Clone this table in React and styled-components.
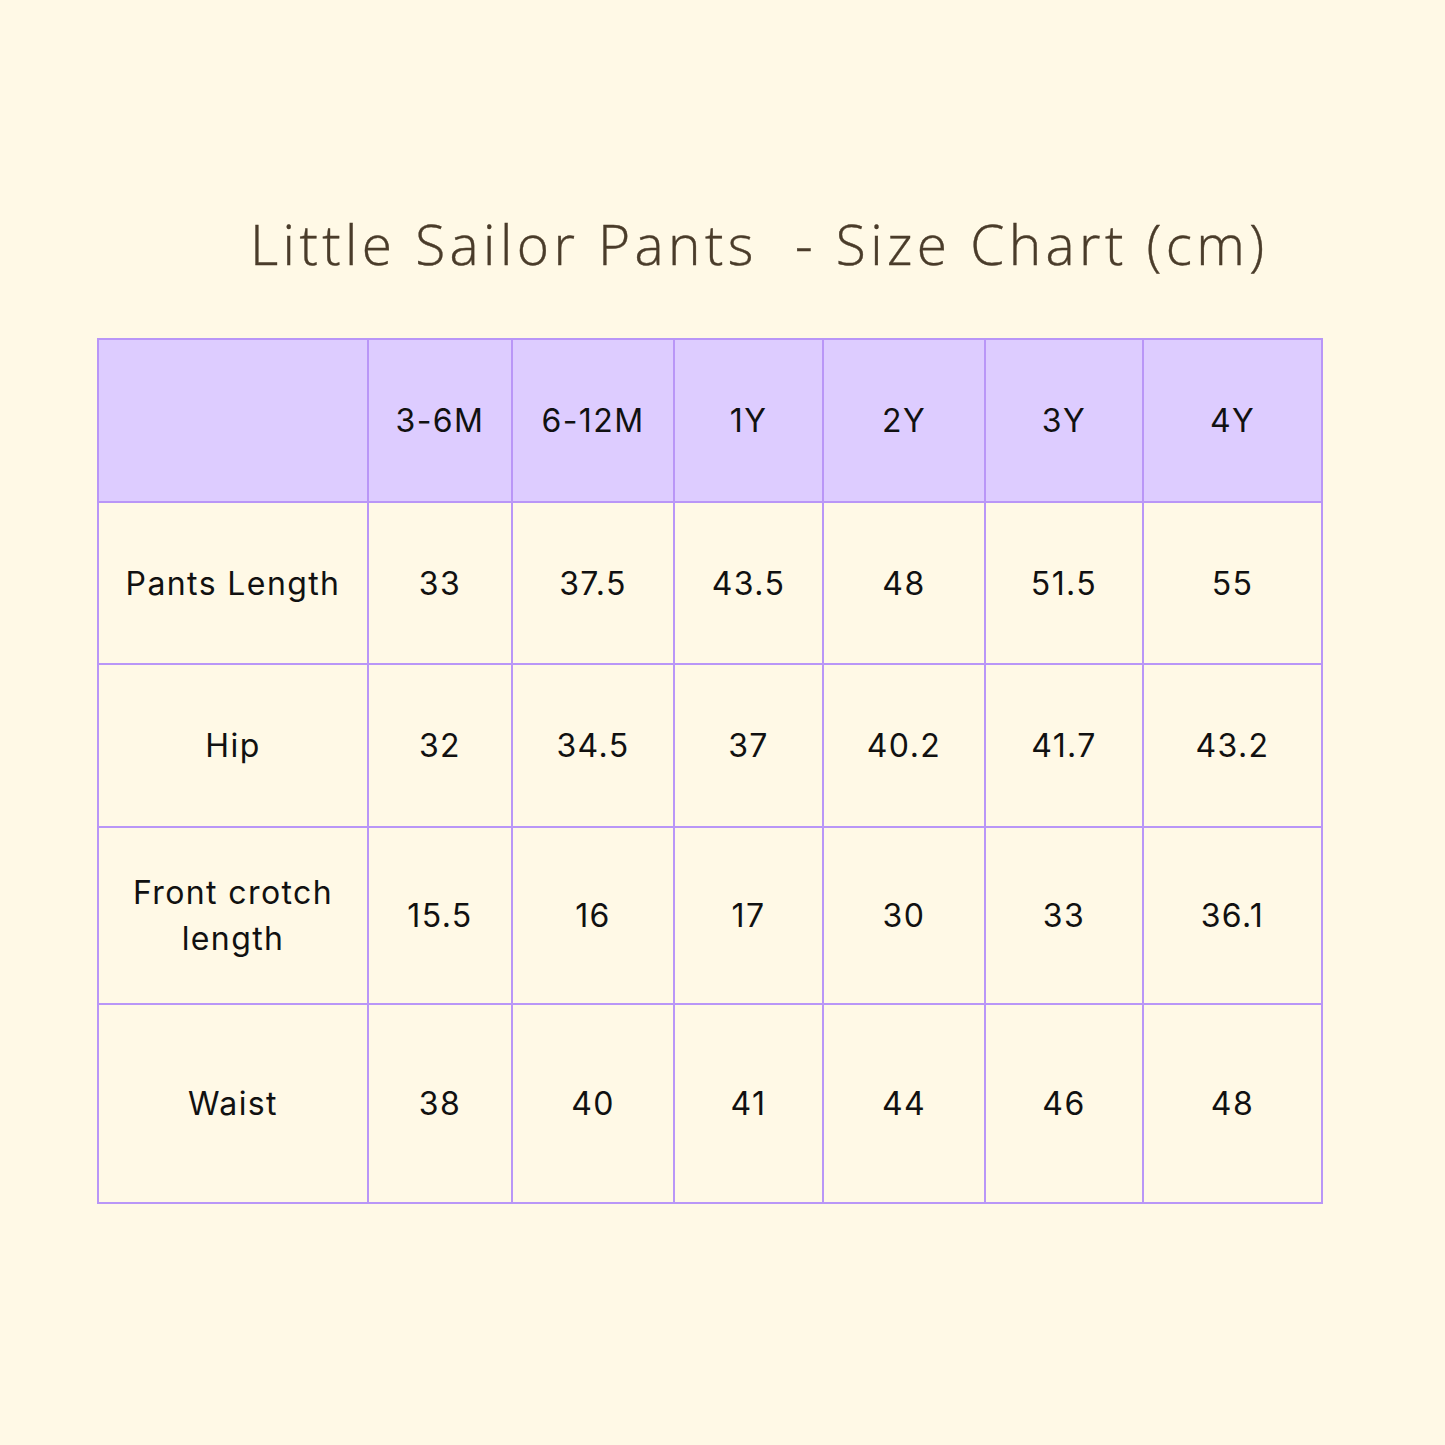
import React from 'react';
import styled, { createGlobalStyle } from 'styled-components';

const GlobalStyle = createGlobalStyle`
  html, body {
    margin: 0;
    padding: 0;
    background: #fff9e6;
  }
`;

const sizes = ['3-6M', '6-12M', '1Y', '2Y', '3Y', '4Y'];

const rows = [
  { label: 'Pants Length', values: ['33', '37.5', '43.5', '48', '51.5', '55'], height: 162 },
  { label: 'Hip', values: ['32', '34.5', '37', '40.2', '41.7', '43.2'], height: 163 },
  { label: ['Front crotch', 'length'], values: ['15.5', '16', '17', '30', '33', '36.1'], height: 177 },
  { label: 'Waist', values: ['38', '40', '41', '44', '46', '48'], height: 199 },
];

const colWidths = [270, 144, 162, 149, 162, 158, 179];

function App() {
  return (
    <Page>
      <GlobalStyle />
      <Title>Little Sailor Pants&nbsp; - Size Chart (cm)</Title>
      <Table>
        <colgroup>
          {colWidths.map((w, i) => (
            <col key={i} style={{ width: w }} />
          ))}
        </colgroup>
        <thead>
          <Row $height={163}>
            <HeadCell />
            {sizes.map((s) => (
              <HeadCell key={s}>{s}</HeadCell>
            ))}
          </Row>
        </thead>
        <tbody>
          {rows.map((r, i) => (
            <Row key={i} $height={r.height}>
              <Cell>
                {Array.isArray(r.label)
                  ? r.label.map((l, j) => <LabelLine key={j}>{l}</LabelLine>)
                  : r.label}
              </Cell>
              {r.values.map((v, j) => (
                <Cell key={j}>{v}</Cell>
              ))}
            </Row>
          ))}
        </tbody>
      </Table>
    </Page>
  );
}

const Page = styled.div`
  width: 1445px;
  height: 1445px;
  box-sizing: border-box;
  padding: 210px 0 0 97px;
  display: flex;
  flex-direction: column;
  align-items: flex-start;
`;

const Title = styled.h1`
  margin: 0 0 60px 153px;
  font-family: "Open Sans", sans-serif;
  font-weight: 300;
  font-size: 55px;
  line-height: 68px;
  letter-spacing: 4.4px;
  color: #4a3c2a;
  -webkit-text-stroke: 0.4px #4a3c2a;
  white-space: pre;
`;

const Table = styled.table`
  border-collapse: collapse;
  table-layout: fixed;
  width: 1224px;
  font-family: Inter, "Open Sans", sans-serif;
  font-size: 32px;
  letter-spacing: 1.4px;
  color: #111111;
`;

const Row = styled.tr`
  height: ${(p) => p.$height}px;
`;

const HeadCell = styled.th`
  background: #ddccff;
  border: 2px solid #b996f7;
  font-weight: 400;
  text-align: center;
  vertical-align: middle;
  padding: 0;
`;

const Cell = styled.td`
  border: 2px solid #b996f7;
  text-align: center;
  vertical-align: middle;
  padding: 0;
`;

const LabelLine = styled.div`
  line-height: 46px;
`;

export default App;
